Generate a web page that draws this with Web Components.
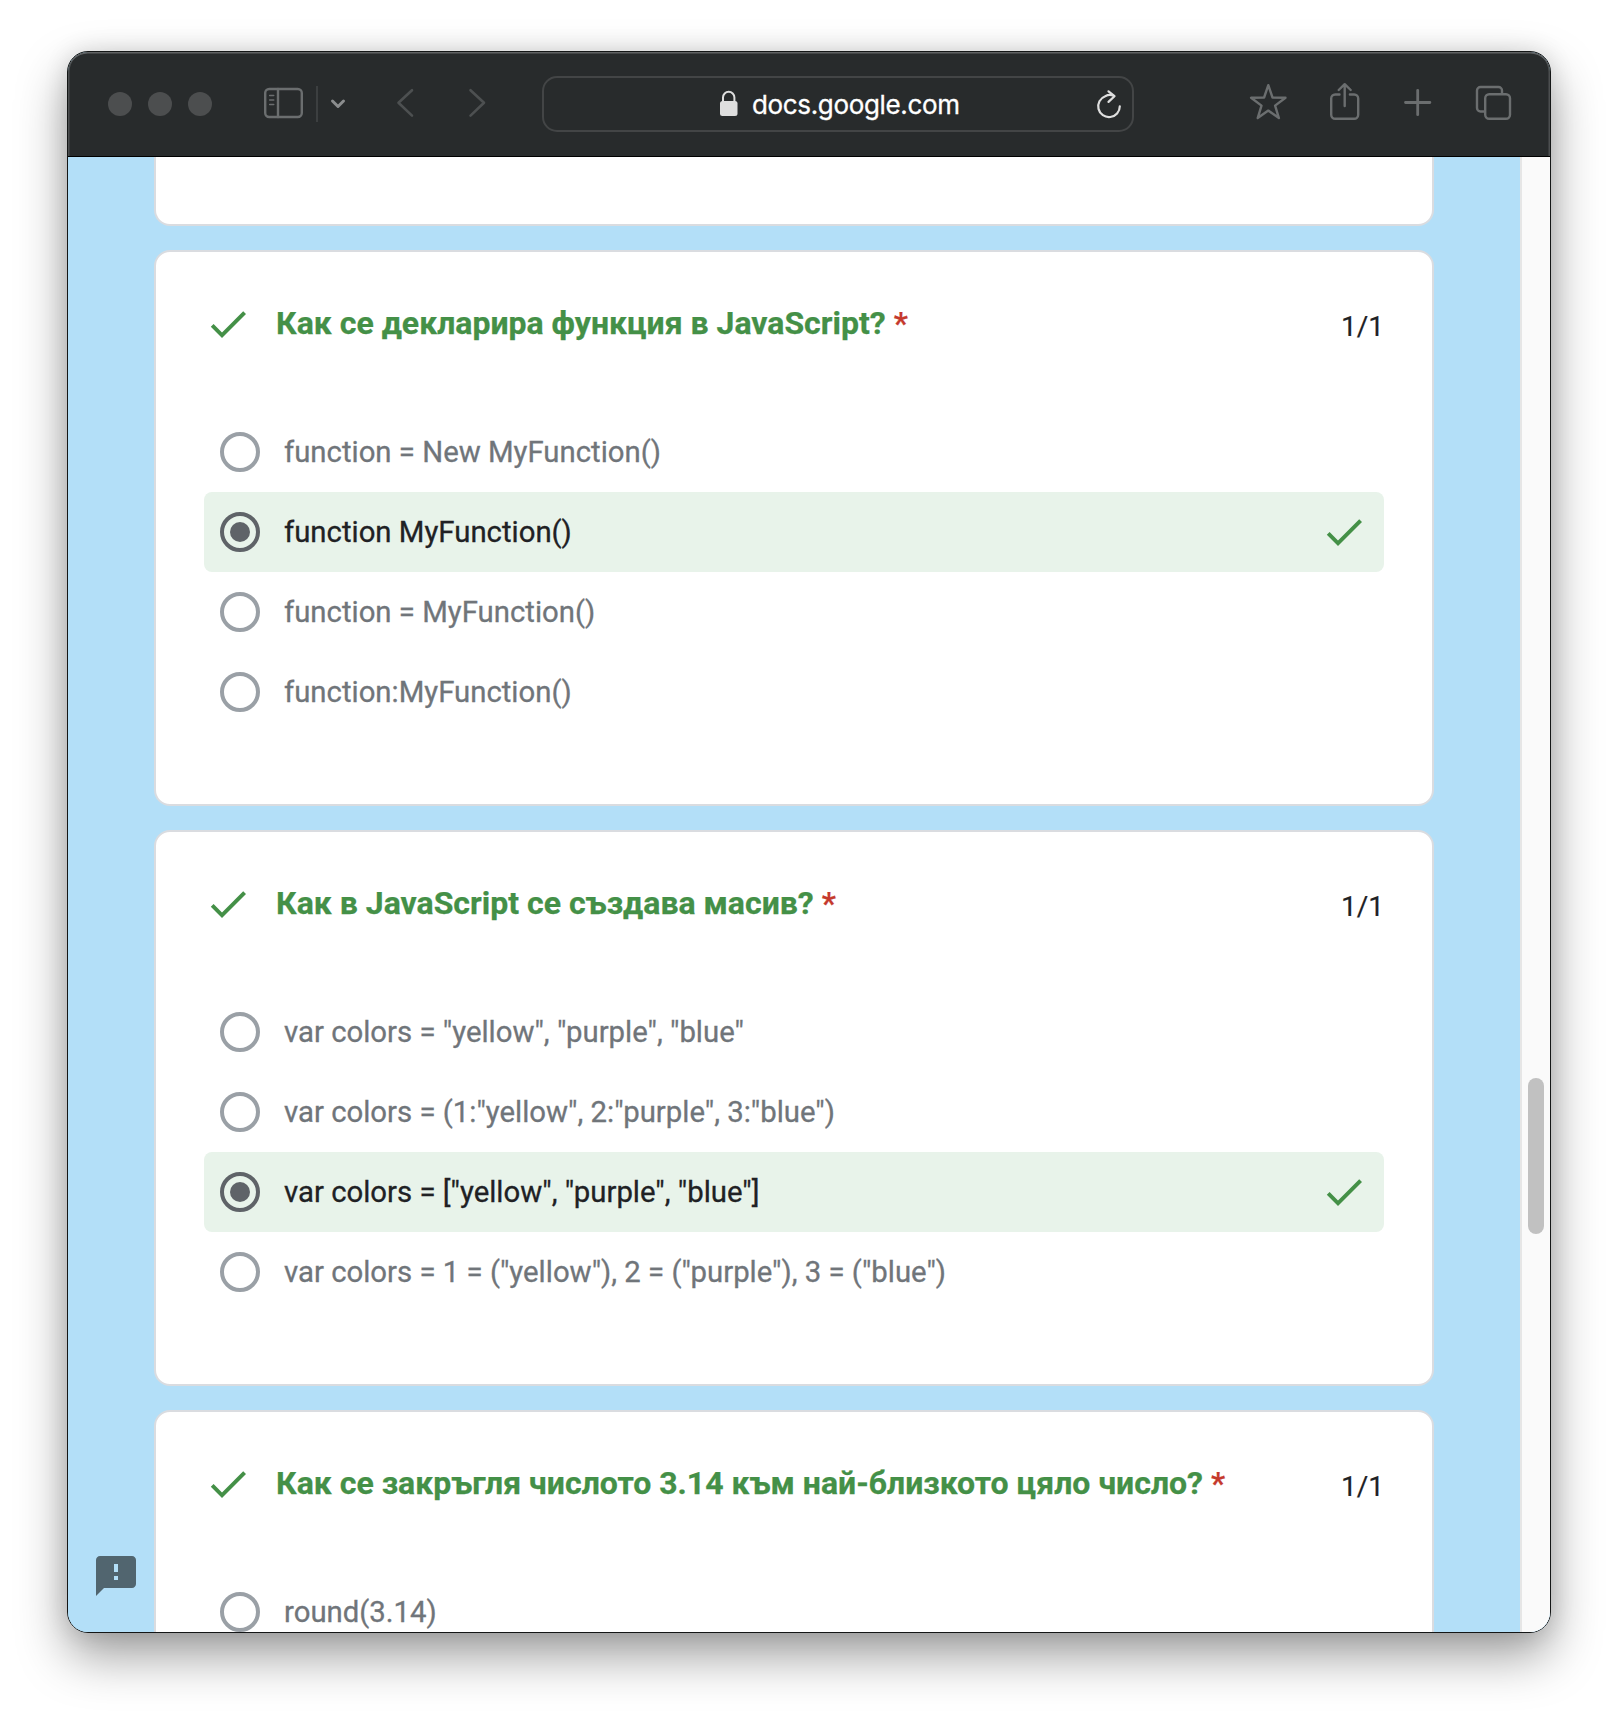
<!DOCTYPE html>
<html lang="bg">
<head>
<meta charset="utf-8">
<title>docs.google.com</title>
<style>
html,body{margin:0;height:100%;background:#fff}
body{font-family:Roboto,"Liberation Sans",sans-serif;overflow:hidden}
</style>
</head>
<body>
<app-window>
  <browser-toolbar slot="toolbar" host="docs.google.com"></browser-toolbar>
  <form-page slot="page">
    <quiz-card tail></quiz-card>
    <quiz-card score="1/1">
      <span slot="title">Как се декларира функция в JavaScript?</span>
      <quiz-option>function = New MyFunction()</quiz-option>
      <quiz-option checked>function MyFunction()</quiz-option>
      <quiz-option>function = MyFunction()</quiz-option>
      <quiz-option>function:MyFunction()</quiz-option>
    </quiz-card>
    <quiz-card score="1/1">
      <span slot="title">Как в JavaScript се създава масив?</span>
      <quiz-option>var colors = "yellow", "purple", "blue"</quiz-option>
      <quiz-option>var colors = (1:"yellow", 2:"purple", 3:"blue")</quiz-option>
      <quiz-option checked>var colors = ["yellow", "purple", "blue"]</quiz-option>
      <quiz-option>var colors = 1 = ("yellow"), 2 = ("purple"), 3 = ("blue")</quiz-option>
    </quiz-card>
    <quiz-card score="1/1">
      <span slot="title">Как се закръгля числото 3.14 към най-близкото цяло число?</span>
      <quiz-option>round(3.14)</quiz-option>
    </quiz-card>
  </form-page>
</app-window>
<script>
const define = (name, html, setup) => customElements.define(name, class extends HTMLElement {
  constructor() {
    super();
    this.attachShadow({mode: 'open'});
  }
  connectedCallback() {
    if (this.shadowRoot.childNodes.length) return;
    this.shadowRoot.innerHTML = html;
    if (setup) setup(this, this.shadowRoot);
  }
});

define('check-mark', `
<style>:host{display:block;width:48px;height:48px;flex:none}svg{display:block}</style>
<svg width="48" height="48" viewBox="0 0 24 24" fill="#449047"><path d="M9 16.2L4.8 12l-1.4 1.4L9 19 21 7l-1.4-1.4L9 16.2z"/></svg>`);

define('app-window', `
<style>
:host{display:block;box-sizing:border-box;height:100%;padding:51px 67px 83px}
.frame{box-sizing:border-box;height:1582px;width:1484px;border:1px solid #141616;border-radius:21px;overflow:hidden;display:flex;flex-direction:column;background:#b3dff8}
.shadow{border-radius:21px;width:1484px;box-shadow:0 23px 50px rgba(0,0,0,.38),0 0 24px rgba(0,0,0,.12)}
::slotted([slot=page]){flex:1;min-height:0}
</style>
<div class="shadow"><div class="frame"><slot name="toolbar"></slot><slot name="page"></slot></div></div>`);

define('browser-toolbar', `
<style>
:host{display:flex;align-items:center;box-sizing:border-box;height:105px;flex:none;padding:0 0 1px 40px;background:#282b2c;border-bottom:1px solid #000;border-radius:20px 20px 0 0;box-shadow:inset 0 2px 0 -.5px #606263,inset 1.5px 0 0 #4c4f50,inset -1.5px 0 0 #4c4f50}
svg{display:block;flex:none;fill:none;stroke:#6b6e6f;stroke-width:2.4;stroke-linecap:round;stroke-linejoin:round}
.dots{display:flex;gap:16px;margin-right:50px}
.dots i{width:24px;height:24px;border-radius:50%;background:#4c4e4f}
.rule{width:2px;height:36px;background:#3c3f40;margin:0 10px}
.url{box-sizing:border-box;width:592px;height:56px;border:2px solid #434546;border-radius:15px;margin:0 112px 0 54px;display:flex;align-items:center;padding:0 7px 0 174px;color:#fff;font:26px/52px Inter,"Liberation Sans",sans-serif}
.host{flex:1;margin-left:14px;padding-top:2px;white-space:nowrap;-webkit-text-stroke:.3px #fff;letter-spacing:-.35px}
</style>
<div class="dots"><i></i><i></i><i></i></div>
<svg width="44" height="44" viewBox="262 82 44 44"><rect x="265.2" y="89" width="36.6" height="28" rx="4"/><path d="M278 89v28"/><path d="M269.7 95.5h4M269.7 100h4M269.7 104.5h4" stroke-width="1.6"/></svg>
<span class="rule"></span>
<svg width="20" height="44" viewBox="328 82 20 44" style="stroke:#8b8d8e;stroke-width:3"><path d="M332.5 101l5.5 5.500 5.500-5.500"/></svg>
<svg width="24" height="44" viewBox="392 82 24 44" style="margin-left:44px;stroke:#4d5051;stroke-width:2.6"><path d="M412 90.200l-13.500 12.600L412 115.600"/></svg>
<svg width="24" height="44" viewBox="464 82 24 44" style="margin-left:48px;stroke:#4d5051;stroke-width:2.6"><path d="M470.500 90.200l13.500 12.600-13.500 12.800"/></svg>
<div class="url">
<svg width="20" height="30" viewBox="719 91 20 30" style="stroke:#dedede;stroke-width:2"><rect x="721" y="103" width="17.500" height="15" rx="2.500" fill="#dedede" stroke="none"/><path d="M724 104v-4.500a5.700 5.700 0 0 1 11.400 0v4.500"/></svg>
<span class="host"></span>
<svg width="30" height="34" viewBox="1095 87.500 30 34" style="stroke:#dedede;stroke-width:2.200"><path d="M1113.500 96.200c-2-.9-5.500-1-8.300.5a10.800 10.800 0 1 0 14.600 10.100"/><path d="M1108.500 91.800l6 4.900-6 5.700"/></svg>
</div>
<svg width="44" height="44" viewBox="1246 82 44 44"><path d="M1268.300 85.200l4.200 12.300 13 .2-10.400 7.900 3.800 12.500-10.600-7.500-10.600 7.500 3.800-12.500-10.400-7.900 13-.2z"/></svg>
<svg width="38" height="44" viewBox="1326 82 38 44" style="margin-left:36px"><path d="M1339.500 94.500h-4.300a4 4 0 0 0-4 4v16.200a4 4 0 0 0 4 4h19a4 4 0 0 0 4-4V98.500a4 4 0 0 0-4-4h-4.300"/><path d="M1344.700 106V84.600M1338.700 90l6-5.800 6 5.800"/></svg>
<svg width="36" height="44" viewBox="1400 82 36 44" style="margin-left:36px;stroke-width:2.800"><path d="M1405.500 102.500h24.400M1417.700 90.300v24.400"/></svg>
<svg width="44" height="44" viewBox="1472 82 44 44" style="margin-left:36px"><path d="M1484 111.500h-3.500a3.500 3.500 0 0 1-3.500-3.500V90.500a3.500 3.500 0 0 1 3.500-3.500h18a3.500 3.500 0 0 1 3.500 3.500V93.500"/><rect x="1485.200" y="94.200" width="24.800" height="24.600" rx="4"/></svg>`,
(el, root) => root.querySelector('.host').textContent = el.getAttribute('host'));

define('form-page', `
<style>
:host{display:flex;overflow:hidden;background:#b3dff8;position:relative}
main{width:1280px;flex:none;margin:0 86px;display:flex;flex-direction:column;gap:24px}
aside{box-sizing:border-box;flex:none;width:30px;border-left:2px solid #e6e6e6;background:#fafafa;padding:921px 0 0 6px}
aside i{display:block;width:16px;height:156px;border-radius:8px;background:#c1c1c1}
.feedback{position:absolute;left:24px;bottom:32px}
</style>
<main><slot></slot></main>
<aside><i></i></aside>
<svg class="feedback" width="48" height="48" viewBox="0 0 24 24" fill="#51656f"><path d="M20 2H4c-1.100 0-2 .9-2 2v18l4-4h14c1.100 0 2-.9 2-2V4c0-1.100-.9-2-2-2zm-7 12h-2v-2h2v2zm0-4h-2V6h2v4z"/></svg>`);

define('quiz-card', `
<style>
:host{display:block;box-sizing:border-box;flex:none;min-height:556px;padding:48px;border:2px solid #dadce0;border-radius:16px;background:#fff}
:host([tail]){min-height:69px;height:69px;padding:0;border-top:0;border-radius:0 0 16px 16px}
header{display:flex;align-items:flex-start;height:112px}
h2{flex:1;margin:-1px 0 0 24px;font-size:32px;line-height:48px;font-weight:700;color:#449047;white-space:nowrap;-webkit-text-stroke:.25px}
b{color:#c5392c;font-weight:500;margin-left:8px}
.score{font-size:28px;line-height:48px;color:#202124;margin-top:3px;-webkit-text-stroke:.2px}
</style>
<header><check-mark></check-mark><h2><slot name="title"></slot><b>*</b></h2><span class="score"></span></header>
<slot></slot>`,
(el, root) => {
  root.querySelector('.score').textContent = el.getAttribute('score') || '';
  if (el.hasAttribute('tail')) root.querySelector('header').remove();
});

define('quiz-option', `
<style>
:host{display:flex;align-items:center;box-sizing:border-box;height:80px;padding:0 16px;border-radius:8px;color:#70757a}
.ring{box-sizing:border-box;width:40px;height:40px;border:4px solid #9aa0a6;border-radius:50%;display:flex;align-items:center;justify-content:center}
.text{flex:1;margin-left:24px;font-size:29.330px;line-height:40px;white-space:nowrap;-webkit-text-stroke:.3px}
check-mark{display:none}
:host([checked]){background:#e8f3ea;color:#202124}
:host([checked]) .ring{border-color:#5f6368}
:host([checked]) .ring::after{content:"";width:20px;height:20px;border-radius:50%;background:#5f6368}
:host([checked]) check-mark{display:block}
</style>
<span class="ring"></span><span class="text"><slot></slot></span><check-mark></check-mark>`);
</script>
</body>
</html>
